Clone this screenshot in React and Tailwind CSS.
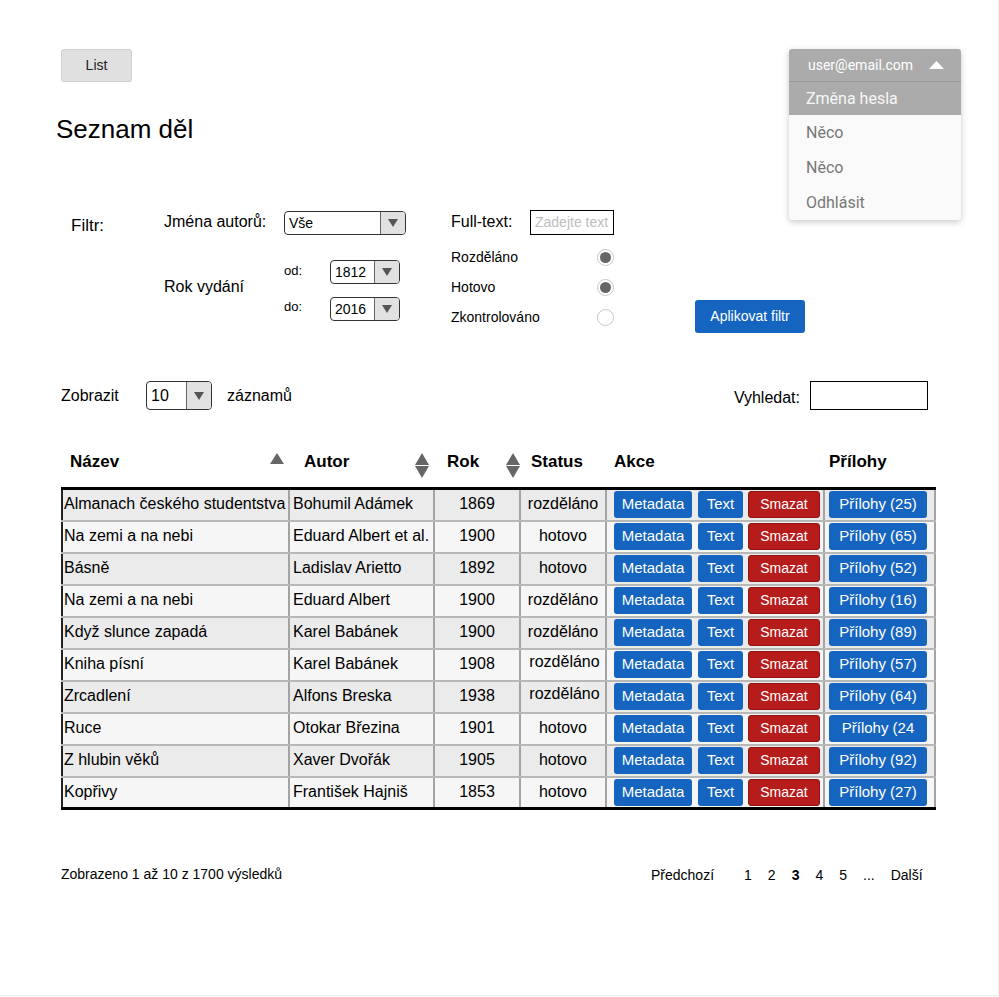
import React from "react";

const rows = [
  ["Almanach českého studentstva", "Bohumil Adámek", "1869", "rozděláno", "Přílohy (25)", false],
  ["Na zemi a na nebi", "Eduard Albert et al.", "1900", "hotovo", "Přílohy (65)", false],
  ["Básně", "Ladislav Arietto", "1892", "hotovo", "Přílohy (52)", false],
  ["Na zemi a na nebi", "Eduard Albert", "1900", "rozděláno", "Přílohy (16)", false],
  ["Když slunce zapadá", "Karel Babánek", "1900", "rozděláno", "Přílohy (89)", false],
  ["Kniha písní", "Karel Babánek", "1908", "rozděláno", "Přílohy (57)", true],
  ["Zrcadlení", "Alfons Breska", "1938", "rozděláno", "Přílohy (64)", true],
  ["Ruce", "Otokar Březina", "1901", "hotovo", "Přílohy (24", false],
  ["Z hlubin věků", "Xaver Dvořák", "1905", "hotovo", "Přílohy (92)", false],
  ["Kopřivy", "František Hajniš", "1853", "hotovo", "Přílohy (27)", false],
];

function Arrow() {
  return (
    <svg width="10" height="8" viewBox="0 0 10 8">
      <polygon points="0,0 10,0 5,8" fill="#555" />
    </svg>
  );
}

function Select({ sizeCls, value, textCls }) {
  return (
    <div className={"flex overflow-hidden rounded-[4px] border border-[#333] bg-white " + sizeCls}>
      <div className={"flex flex-1 items-center pl-[4px] " + textCls}>{value}</div>
      <div className="flex w-[25px] items-center justify-center border-l border-[#666] bg-[#e1e1e1]">
        <Arrow />
      </div>
    </div>
  );
}

function Radio({ checked }) {
  return (
    <div className="flex h-[17px] w-[17px] items-center justify-center rounded-full border border-[#c8c8c8] bg-white">
      {checked && <div className="h-[11px] w-[11px] rounded-full bg-[#666]" />}
    </div>
  );
}

function SortBoth() {
  return (
    <svg width="14" height="25" viewBox="0 0 14 25">
      <polygon points="7,0 14,12 0,12" fill="#666" />
      <polygon points="0,13 14,13 7,25" fill="#666" />
    </svg>
  );
}

function SortUp() {
  return (
    <svg width="14" height="11" viewBox="0 0 14 11">
      <polygon points="7,0 14,11 0,11" fill="#666" />
    </svg>
  );
}

export default function App() {
  return (
    <div className="relative h-[996px] w-[999px] border-b border-r border-[#ececec] bg-white font-['Liberation_Sans',Arial,sans-serif] text-black">
      <div className="pl-[61px] pt-[49px]">
        <button className="h-[33px] w-[71px] rounded-[3px] border border-[#cfcfcf] bg-[#e0e0e0] text-[14px] text-[#222]">
          List
        </button>
        <h1 className="ml-[-5px] mt-[32px] text-[26px] leading-[30px]">Seznam děl</h1>

        {/* Filter */}
        <div className="mt-[66px] flex items-start">
          <div className="ml-[10px] w-[93px] pt-[6px] text-[17px] leading-[20px]">Filtr:</div>
          <div className="w-[287px]">
            <div className="mt-[1px] flex h-[24px] items-center">
              <div className="w-[120px] pb-[2px] text-[16px] leading-[20px]">Jména autorů:</div>
              <Select sizeCls="h-[24px] w-[122px]" value="Vše" textCls="text-[14px]" />
            </div>
            <div className="mt-[25px] flex">
              <div className="w-[120px] pt-[17px] text-[16px] leading-[20px]">Rok vydání</div>
              <div>
                <div className="flex h-[24px] items-center">
                  <div className="w-[46px] pb-[2px] text-[13px]">od:</div>
                  <Select sizeCls="h-[24px] w-[70px]" value="1812" textCls="text-[14px]" />
                </div>
                <div className="mt-[13px] flex h-[24px] items-center">
                  <div className="w-[46px] pb-[4px] text-[13px]">do:</div>
                  <Select sizeCls="h-[24px] w-[70px]" value="2016" textCls="text-[14px]" />
                </div>
              </div>
            </div>
          </div>
          <div className="w-[163px]">
            <div className="flex h-[25px] items-center">
              <div className="w-[79px] pb-[2px] text-[16px] leading-[20px]">Full-text:</div>
              <div className="flex h-[25px] w-[84px] items-center border border-black pl-[4px] text-[14px] text-[#bdbdbd]">
                Zadejte text
              </div>
            </div>
            <div className="mt-[7px]">
              <div className="flex h-[30px] items-center justify-between">
                <span className="text-[14px]">Rozděláno</span>
                <Radio checked />
              </div>
              <div className="flex h-[30px] items-center justify-between">
                <span className="text-[14px]">Hotovo</span>
                <Radio checked />
              </div>
              <div className="flex h-[30px] items-center justify-between">
                <span className="text-[14px]">Zkontrolováno</span>
                <Radio />
              </div>
            </div>
          </div>
          <button className="ml-[81px] mt-[90px] h-[33px] w-[110px] rounded-[3px] bg-[#1565c0] text-[14px] text-white">
            Aplikovat filtr
          </button>
        </div>

        {/* Zobrazit / Vyhledat */}
        <div className="mt-[48px] flex h-[29px] w-[867px] items-center justify-between">
          <div className="flex items-center">
            <div className="w-[85px] text-[16px]">Zobrazit</div>
            <Select sizeCls="h-[29px] w-[66px]" value="10" textCls="text-[16px]" />
            <div className="ml-[15px] text-[16px]">záznamů</div>
          </div>
          <div className="flex items-center">
            <div className="mr-[10px] pt-[4px] text-[16px]">Vyhledat:</div>
            <div className="h-[29px] w-[118px] border border-black" />
          </div>
        </div>

        {/* Table header */}
        <div className="mt-[31px] flex h-[46px] text-[17px] font-bold leading-[20px]">
          <div className="flex w-[229px] items-start justify-between pl-[9px] pr-[6px] pt-[11px]">
            <span>Název</span>
            <span className="pt-[1px]"><SortUp /></span>
          </div>
          <div className="flex w-[145px] items-start justify-between pl-[14px] pr-[6px] pt-[11px]">
            <span>Autor</span>
            <span className="pt-[1px]"><SortBoth /></span>
          </div>
          <div className="flex w-[86px] items-start justify-between pl-[12px] pr-[1px] pt-[11px]">
            <span>Rok</span>
            <span className="pt-[1px]"><SortBoth /></span>
          </div>
          <div className="w-[86px] pl-[10px] pt-[11px]">Status</div>
          <div className="w-[218px] pl-[7px] pt-[11px]">Akce</div>
          <div className="w-[111px] pl-[4px] pt-[11px]">Přílohy</div>
        </div>

        {/* Table body */}
        <div className="w-[875px] border-b-[3px] border-t-[3px] border-black text-[16px]">
          {rows.map((r, i) => {
            const last = i === rows.length - 1;
            const bg = i % 2 === 0 ? "bg-[#ebebeb]" : "bg-[#f6f6f6]";
            return (
              <div
                key={i}
                className={
                  "flex " + bg + " " + (last ? "h-[29px]" : "h-[32px] border-b-2 border-[#b8b8b8]")
                }
              >
                <div className="flex w-[229px] items-center border-l-2 border-r-2 border-l-[#222] border-r-[#a3a3a3] pb-[2px] pl-[1px] whitespace-nowrap">
                  {r[0]}
                </div>
                <div className="flex w-[145px] items-center border-r-2 border-[#a3a3a3] pb-[2px] pl-[3px] whitespace-nowrap">
                  {r[1]}
                </div>
                <div className="flex w-[86px] items-center justify-center border-r-2 border-[#a3a3a3] pb-[2px]">
                  {r[2]}
                </div>
                <div
                  className={
                    "flex w-[86px] items-center justify-center border-r-2 border-[#a3a3a3] " +
                    (r[5] ? "pb-[6px] pl-[3px]" : "pb-[2px]")
                  }
                >
                  {r[3]}
                </div>
                <div className="flex w-[218px] items-center border-r-2 border-[#a3a3a3] pb-[1px] pl-[7px] text-[15px]">
                  <button className="h-[27px] w-[78px] rounded-[3px] bg-[#1565c0] text-white">Metadata</button>
                  <button className="ml-[6px] h-[27px] w-[45px] rounded-[3px] bg-[#1565c0] text-white">Text</button>
                  <button className="ml-[5px] h-[27px] w-[72px] rounded-[3px] border border-[#8e1414] bg-[#b71c1c] text-[14px] text-white">
                    Smazat
                  </button>
                </div>
                <div className="flex w-[111px] items-center border-r-2 border-[#a3a3a3] pb-[1px] pl-[4px] text-[15px]">
                  <button className="h-[27px] w-[98px] rounded-[3px] bg-[#1565c0] text-white">{r[4]}</button>
                </div>
              </div>
            );
          })}
        </div>

        {/* Footer */}
        <div className="mt-[55px] flex h-[20px] items-center text-[14px]">
          <div className="w-[590px] pb-[2px]">Zobrazeno 1 až 10 z 1700 výsledků</div>
          <div className="flex items-center gap-4">
            <span className="mr-[14px]">Předchozí</span>
            <span>1</span>
            <span>2</span>
            <span className="font-bold">3</span>
            <span>4</span>
            <span>5</span>
            <span>...</span>
            <span>Další</span>
          </div>
        </div>
      </div>

      {/* User dropdown */}
      <div className="absolute left-[789px] top-[49px] w-[172px] overflow-hidden rounded-[3px] bg-[#fafafa] font-['Roboto',sans-serif] shadow-[0_2px_6px_rgba(0,0,0,0.22)]">
        <div className="flex h-[33px] items-center justify-between border-b border-[#999] bg-[#ababab] pl-[19px] pr-[17px] text-[14px] text-white">
          <span>user@email.com</span>
          <svg width="15" height="8" viewBox="0 0 15 8">
            <polygon points="7.5,0 15,8 0,8" fill="#fff" />
          </svg>
        </div>
        <div className="flex h-[33px] items-center bg-[#ababab] pl-[17px] text-[16px] text-[#f7f7f7]">Změna hesla</div>
        <div className="flex h-[35px] items-center pl-[17px] text-[16px] text-[#777]">Něco</div>
        <div className="flex h-[35px] items-center pl-[17px] text-[16px] text-[#777]">Něco</div>
        <div className="flex h-[35px] items-center pl-[17px] text-[16px] text-[#777]">Odhlásit</div>
      </div>
    </div>
  );
}
